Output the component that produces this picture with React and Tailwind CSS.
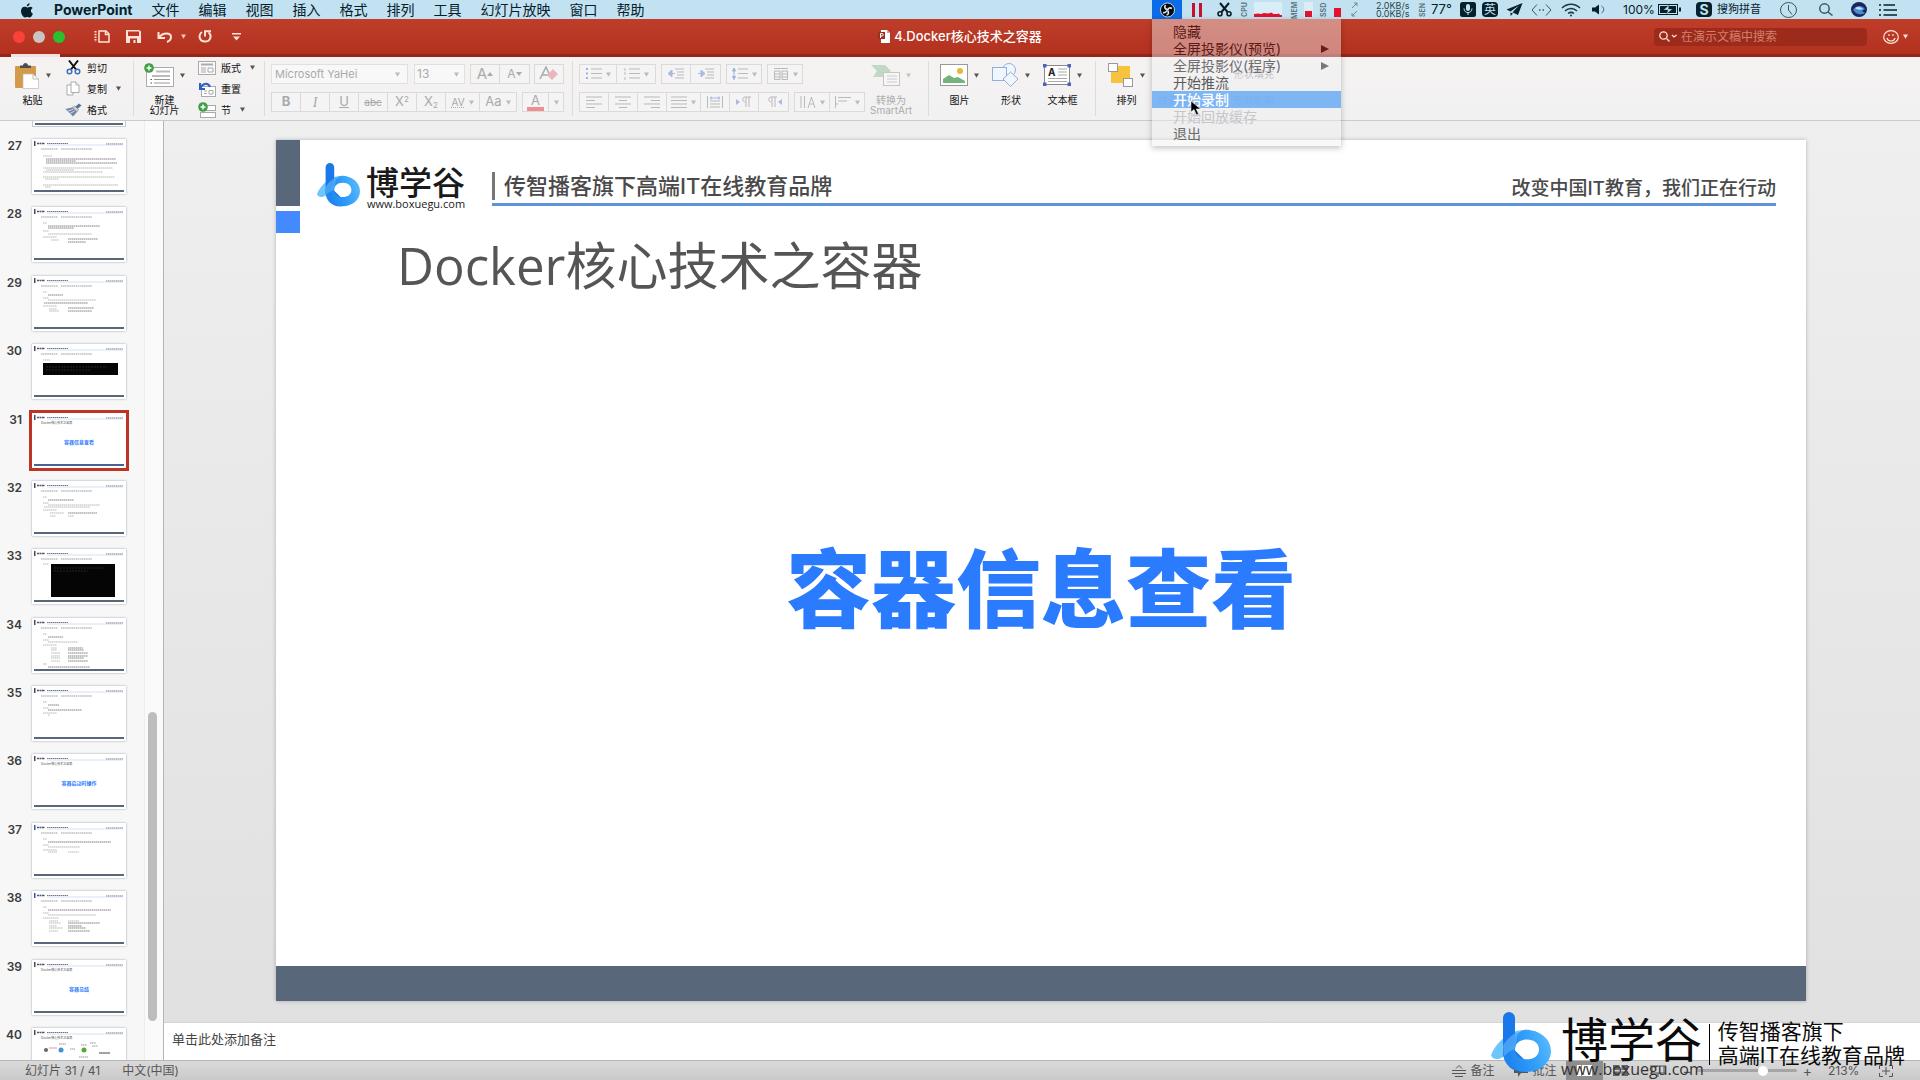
import React from "react";

const UI = "font-['Inter','Noto_Sans_CJK_SC',sans-serif]";

function Caret({ className = "text-[#555]" }) {
  return (
    <svg width="5" height="5" viewBox="0 0 5 5" className={`shrink-0 ${className}`} aria-hidden="true">
      <path d="M0 0.5H5L2.5 4.8Z" fill="currentColor" />
    </svg>
  );
}

function BrandMark({ className }) {
  return (
    <svg viewBox="0 0 60 62" preserveAspectRatio="none" className={className} aria-hidden="true">
      <defs>
        <linearGradient id="ring" x1="0" y1="0.6" x2="1" y2="0.3">
          <stop offset="0.1" stopColor="#1f86ef" />
          <stop offset="0.5" stopColor="#2f9bf8" />
          <stop offset="1" stopColor="#58bbff" />
        </linearGradient>
      </defs>
      <path d="M0 44C3 35 12 24 26 19L36 18L30 28C22 31 18 36 13 45C8 49 2 49 0 44Z" fill="#6fc6fb" />
      <path d="M12 6a6 6 0 0 1 12 0V24L23 38L35 50V61C20 62 12 52 12 40Z" fill="#1b78ea" />
      <path
        fillRule="evenodd"
        d="M35 18C48 18 60 27 60 39.500C60 52 49 61 36 61C23 61 12 53 12 40L22 32C25 23 29 18 35 18ZM36 28C29 28 24 32 24 38C24 44 29 48 36 48C43 48 48 44 48 38C48 32 43 28 36 28Z"
        fill="url(#ring)"
      />
      <path d="M12 34C16 27 21 23 27 20L24 38C20 38 16 42 13 45Z" fill="#4fa9f8" opacity="0.8" />
    </svg>
  );
}

/* ---------- system menu bar ---------- */

const MENUS = ["文件", "编辑", "视图", "插入", "格式", "排列", "工具", "幻灯片放映", "窗口", "帮助"];

function ObsMenu() {
  const row = "flex h-[17px] w-full items-center justify-between pl-[21px] pr-3 text-left text-[14px] leading-[17px] whitespace-nowrap";
  return (
    <div className="absolute left-0 top-full z-20 w-[189px] bg-[#f0f0f2]/45 py-1 shadow-[0_2px_6px_rgba(0,0,0,0.25)]" role="menu">
      <button className={`${row} text-[#5c1a17]`}>隐藏</button>
      <button className={`${row} text-[#5c1a17]`}>
        全屏投影仪(预览)
        <svg width="8" height="8" viewBox="0 0 8 8"><path d="M0 0L8 4L0 8Z" fill="#6a1d18" /></svg>
      </button>
      <button className={`${row} text-[#6e6e6e]`}>
        全屏投影仪(程序)
        <svg width="8" height="8" viewBox="0 0 8 8"><path d="M0 0L8 4L0 8Z" fill="#777" /></svg>
      </button>
      <button className={`${row} text-[#5a5a5a]`}>开始推流</button>
      <button className={`${row} bg-[#6aabf5]/85 font-medium text-white`}>开始录制</button>
      <button className={`${row} text-[#c4c6c9]`} disabled>开始回放缓存</button>
      <button className={`${row} text-[#6a6a6a]`}>退出</button>
      <svg className="absolute left-[38px] top-[81px]" width="12" height="16" viewBox="0 0 12 16" aria-hidden="true">
        <path d="M1 1V12L4 9.500L6.500 15L8.500 14L6.200 9H10.500Z" fill="#000" stroke="#fff" strokeWidth="0.5" />
      </svg>
    </div>
  );
}

function Vert({ children, className }) {
  return (
    <span className={`flex h-4 w-2 rotate-180 items-center justify-center text-[7px] font-bold leading-[8px] text-[#5d7480] [writing-mode:vertical-rl] ${className}`}>
      {children}
    </span>
  );
}

function MenuBar() {
  return (
    <header className="relative z-20 flex h-[19px] shrink-0 items-center bg-[#c2e2f1] pl-5 pr-[23px] text-[14px] text-[#06202c]">
      <svg width="14" height="15" viewBox="0 0 14 15" className="mt-px" aria-label="Apple">
        <path d="M9.600 0.300C9.700 1.900 8.300 3.500 6.800 3.400C6.600 1.900 8.100 0.400 9.600 0.300ZM12.900 10.500C12.300 12.300 11 14.500 9.600 14.500C8.700 14.500 8.400 14 7.300 14C6.200 14 5.800 14.500 5 14.500C3.200 14.500 1 11.200 1 8.100C1 5.300 2.800 3.800 4.600 3.800C5.700 3.800 6.500 4.500 7.300 4.500C8 4.500 9.100 3.700 10.300 3.700C11.200 3.700 12.100 4.100 12.700 4.900C10.100 6.400 10.600 9.500 12.900 10.500Z" fill="#06202c" />
      </svg>
      <nav className="flex items-center">
        <button className="ml-5 text-[14px] font-bold leading-[19px]">PowerPoint</button>
        {MENUS.map((m) => (
          <button key={m} className="ml-[19px] leading-[19px]">{m}</button>
        ))}
      </nav>

      <div className="ml-auto flex h-full items-center">
        <div className="relative flex h-full">
          <button className="flex h-full w-[30px] items-center justify-center bg-[#0c6be6]" aria-label="OBS">
            <svg width="17" height="16" viewBox="0 0 17 16">
              <circle cx="8.500" cy="8" r="7" fill="#04080c" stroke="#d7e3ee" strokeWidth="0.900" />
              <path d="M6.500 3C5 5 6 7 8.300 7.500M13 6.500C11 5.200 9.300 6 8.700 8.200M7.500 13C9.500 12.600 10.200 10.500 8.500 8.500M4 10.500C5.500 11 7 10.500 8 8.500" fill="none" stroke="#dfe8ef" strokeWidth="1.600" />
            </svg>
          </button>
          <ObsMenu />
        </div>
        <svg className="ml-[10px]" width="10" height="14" viewBox="0 0 10 14"><path d="M0 0H3V14H0ZM7 0H10V14H7Z" fill="#c8102e" /></svg>
        <svg className="ml-[15px]" width="15" height="15" viewBox="0 0 15 15" fill="none" stroke="#0b1d26">
          <path d="M3 1L10.500 10M12 1L4.500 10" strokeWidth="2" />
          <circle cx="3" cy="11.700" r="2" strokeWidth="1.600" /><circle cx="12" cy="11.700" r="2" strokeWidth="1.600" />
        </svg>
        <Vert className="ml-[9px]">CPU</Vert>
        <svg className="ml-[5px]" width="28" height="15" viewBox="0 0 28 15">
          <rect width="28" height="15" fill="#d9edf6" />
          <path d="M0 15V12L4 11.500L7 12L10 11L14 11.500L18 10.500L19 12H23L25 11.500L26 13H28V15Z" fill="#e0142f" />
        </svg>
        <Vert className="ml-[9px]">MEM</Vert>
        <svg className="ml-[5px]" width="9" height="15" viewBox="0 0 9 15"><rect width="9" height="15" fill="#dcecf4" /><rect x="1" y="9" width="7" height="6" fill="#e0142f" /></svg>
        <Vert className="ml-[7px]">SSD</Vert>
        <svg className="ml-[5px]" width="9" height="15" viewBox="0 0 9 15"><rect y="6" x="1" width="7" height="9" fill="#e0142f" /></svg>
        <svg className="ml-[9px]" width="7" height="15" viewBox="0 0 7 15" fill="none" stroke="#6f8793"><path d="M1 6L6 1M3 1H6V4M6 9L1 14M1 11V14H4" /></svg>
        <span className="ml-[18px] flex w-[34px] flex-col text-[9px] leading-[8px] whitespace-nowrap text-[#2c4450]">
          <span>2.0KB/s</span>
          <span>0.0KB/s</span>
        </span>
        <Vert className="ml-[9px]">SEN</Vert>
        <span className="ml-1 w-[22px] text-[13px] whitespace-nowrap">77°</span>
        <svg className="ml-[7px]" width="16" height="15" viewBox="0 0 16 15">
          <rect width="16" height="15" rx="2.500" fill="#06202c" />
          <rect x="6" y="2" width="4" height="7" rx="2" fill="#c2e2f1" />
          <path d="M4 6.500C4 12 12 12 12 6.500M8 10.500V13" fill="none" stroke="#c2e2f1" />
        </svg>
        <span className="ml-[6px] flex h-[15px] w-4 items-center justify-center rounded-sm bg-[#06202c] text-[12px] leading-none text-[#c2e2f1]">英</span>
        <svg className="ml-2" width="17" height="14" viewBox="0 0 17 14"><path d="M16.500 0L0.500 6.500L4.500 8.500L13 2.500L6.500 9.300L12 12ZM4.500 9.500V13L7 10.500ZM0.500 12.500L3 9.500Z" fill="#06202c" /></svg>
        <svg className="ml-2" width="21" height="12" viewBox="0 0 21 12" fill="none" stroke="#3c5663"><path d="M6 0.500L1 6L6 11.500M15 0.500L20 6L15 11.500" /><path d="M8 6H9.500M11.500 6H13" strokeWidth="1.500" /></svg>
        <svg className="ml-[9px]" width="20" height="14" viewBox="0 0 20 14" fill="none" stroke="#1c3642" strokeWidth="1.500">
          <path d="M1 5C6 0 14 0 19 5M4 8C7.500 4.500 12.500 4.500 16 8M7 10.500C9 9 11 9 13 10.500" /><circle cx="10" cy="12.500" r="1" fill="#1c3642" stroke="none" />
        </svg>
        <svg className="ml-[11px]" width="13" height="11" viewBox="0 0 13 11"><path d="M0 3.500H3L7 0.500V10.500L3 7.500H0Z" fill="#06202c" /><path d="M9.500 2C12.500 4 12.500 7 9.500 9" fill="none" stroke="#3c5663" /></svg>
        <span className="ml-[18px] w-[31px] text-[12px] whitespace-nowrap">100%</span>
        <svg className="ml-1" width="23" height="11" viewBox="0 0 23 11">
          <rect x="0.500" y="0.500" width="19" height="10" fill="none" stroke="#06202c" /><rect x="2" y="2" width="16" height="7" fill="#06202c" /><path d="M21 3.500H23V7.500H21Z" fill="#06202c" />
          <path d="M11 1L5.500 6H10L8.500 10L14.500 5H10.500Z" fill="#c2e2f1" stroke="#06202c" strokeWidth="0.300" />
        </svg>
        <span className="ml-[15px] flex h-[15px] w-4 items-center justify-center rounded-sm bg-[#06202c] text-[14px] font-bold leading-none text-[#c2e2f1]">S</span>
        <span className="ml-[5px] text-[11px]">搜狗拼音</span>
        <svg className="ml-[19px]" width="17" height="16" viewBox="0 0 17 16" fill="none" stroke="#3c5663"><ellipse cx="8.500" cy="8" rx="8" ry="7.500" /><path d="M8.500 3V8L12 12.500" /></svg>
        <svg className="ml-[22px]" width="14" height="13" viewBox="0 0 14 13" fill="none" stroke="#3c5663" strokeWidth="1.500"><circle cx="5.500" cy="5.500" r="4.700" /><path d="M9 9L13.500 12.500" /></svg>
        <svg className="ml-[18px]" width="16" height="15" viewBox="0 0 16 15">
          <ellipse cx="8" cy="7.500" rx="8" ry="7.500" fill="#20245c" /><path d="M2 8C5 3 11 3 14 7L11 9L14 11C9 14 5 12 2 8Z" fill="#3f8fd8" /><path d="M4 6C7 4 10 5 12 7C9 8 6 8 4 6Z" fill="#d5dcf5" />
        </svg>
        <svg className="ml-3" width="18" height="12" viewBox="0 0 18 12" stroke="#06202c" strokeWidth="1.500"><path d="M0 1H2M4.500 1H16M0 6H2M4.500 6H18M0 11H2M4.500 11H18" /></svg>
      </div>
    </header>
  );
}

/* ---------- window title bar ---------- */

function TitleBar() {
  return (
    <div className="relative grid h-[38px] shrink-0 grid-cols-[1fr_auto_1fr] items-center border-b-[3px] border-[#93261a] bg-linear-to-b from-[#bf3e2a] to-[#b3301f] text-[#fde4d6]">
      <div className="flex items-center pl-[13px]">
        <button className="size-3 rounded-full bg-[#f9423a]" aria-label="关闭" />
        <button className="ml-2 size-3 rounded-full bg-[#c9c5c2]" aria-label="最小化" />
        <button className="ml-2 size-3 rounded-full bg-[#27c22f]" aria-label="全屏" />
        <button className="ml-[29px]" aria-label="侧栏">
          <svg width="16" height="13" viewBox="0 0 16 13" fill="none" stroke="currentColor" strokeWidth="1.500"><path d="M5 1H12L15 4V12H5Z" /><path d="M11.500 1V4.500H15" /><path d="M1.500 1V12" strokeDasharray="1.500 1.200" strokeWidth="2" /></svg>
        </button>
        <button className="ml-4" aria-label="保存">
          <svg width="15" height="13" viewBox="0 0 15 13"><path fillRule="evenodd" d="M0 0H13L15 1.500V13H0ZM2 1.500V6H13V1.500ZM4 8.500V13H11V8.500ZM7.500 10H9.500V13H7.500Z" fill="currentColor" /></svg>
        </button>
        <button className="ml-4 flex items-center gap-2" aria-label="撤消">
          <svg width="16" height="12" viewBox="0 0 16 12" fill="none" stroke="currentColor" strokeWidth="2"><path d="M1.500 1V7H8M2 6.500C6 1 14 1.500 14 6C14 8.500 12.500 10 10 11" /></svg>
          <Caret className="text-[#f5c9b8]" />
        </button>
        <button className="ml-3" aria-label="重复">
          <svg width="14" height="13" viewBox="0 0 14 13" fill="none" stroke="currentColor" strokeWidth="2"><path d="M4 2C0 4.500 1 11.500 7 11.500C13 11.500 14 5 10.500 2.500" /><path d="M7 6.500V1.200H13" /></svg>
        </button>
        <button className="ml-5" aria-label="自定义">
          <svg width="9" height="8" viewBox="0 0 9 8" fill="currentColor"><path d="M0 0H9V1.500H0ZM1 3.500H8L4.500 7.500Z" /></svg>
        </button>
      </div>
      <div className="flex items-center gap-1">
        <svg width="12" height="13" viewBox="0 0 12 13"><path d="M3 0H9L12 3V13H3Z" fill="#fff" /><path d="M9 0V3H12Z" fill="#d8a294" /><rect x="0" y="2" width="7" height="7" fill="#9c3020" /><path d="M2.500 8V3.500H4.500Q6 4.800 4.500 6H2.500" fill="none" stroke="#fff" /></svg>
        <h1 className="text-[13px] font-medium whitespace-nowrap text-white">4.Docker核心技术之容器</h1>
      </div>
      <div className="flex items-center justify-end pr-[12px]">
        <label className="flex h-[18px] w-[213px] items-center rounded-sm bg-[#9c2b1b] pl-[5px]">
          <svg width="18" height="11" viewBox="0 0 18 11" fill="none" stroke="#fde4d6" strokeWidth="1.300"><circle cx="4.500" cy="4.500" r="3.700" /><path d="M7.500 7.500L10.500 10.500M13 4L15 6L17.500 4" /></svg>
          <input className="ml-1 w-40 bg-transparent text-[12px] text-white outline-none placeholder:text-[#d3806f]" placeholder="在演示文稿中搜索" aria-label="搜索" />
        </label>
        <button className="ml-4 flex items-center gap-1" aria-label="反馈">
          <svg width="16" height="14" viewBox="0 0 16 14" fill="none" stroke="#fde4d6" strokeWidth="1.200"><ellipse cx="8" cy="7" rx="7.300" ry="6.400" /><path d="M4 8C5 12 11 12 12 8M6 4V6M10 4V6" /></svg>
          <Caret className="text-[#fde4d6]" />
        </button>
      </div>
      <span className="absolute -bottom-[3px] left-[11px] h-[3px] w-[49px] bg-[#efe3e1]" />
    </div>
  );
}

/* ---------- ribbon ---------- */

function Big({ icon, label, faded, className = "" }) {
  return (
    <button className={`flex flex-col items-center ${faded ? "text-[#9a9a9a] opacity-80" : "text-[#111]"} ${className}`}>
      <span className="flex h-[28px] items-center gap-[6px]">
        {icon}
        <Caret className={faded ? "text-[#bbb]" : "text-[#555]"} />
      </span>
      <span className="mt-[6px] flex flex-col text-[10px] leading-[10px] whitespace-nowrap">
        {label.map((l) => <span key={l}>{l}</span>)}
      </span>
    </button>
  );
}

function Small({ icon, label, caret }) {
  return (
    <button className="flex flex-1 items-center gap-[5px] text-[10px] leading-none whitespace-nowrap text-[#111]">
      <span className="flex w-[18px] justify-center">{icon}</span>
      {label}
      {caret && <span className="ml-1"><Caret /></span>}
    </button>
  );
}

const Sep = () => <div className="my-1 w-px shrink-0 bg-[#dcdcdc]" />;

function Group({ children, className = "" }) {
  return <div className={`flex h-5 divide-x divide-[#dadada] border border-[#dadada] bg-[#f4f4f4] text-[#a9a9a9] ${className}`}>{children}</div>;
}

function Tool({ label, w = "w-[29px]", children, caret }) {
  return (
    <button className={`flex items-center justify-center gap-1 ${w}`} aria-label={label} disabled>
      {children}
      {caret && <Caret className="text-[#bbb]" />}
    </button>
  );
}

function Lines({ d = "M0 1H14M0 4H10M0 7H14M0 10H10", extra }) {
  return (
    <svg width="16" height="12" viewBox="0 0 16 12" fill="none" stroke="#b9b9b9">
      <path d={d} />
      {extra}
    </svg>
  );
}

const plus = <g><circle cx="5" cy="5" r="4.800" fill="#3f9d44" /><path d="M5 2.500V7.500M2.500 5H7.500" stroke="#fff" strokeWidth="1.500" /></g>;

function Ribbon() {
  return (
    <div className="flex h-[64px] shrink-0 border-b border-[#cbcbcb] bg-linear-to-b from-[#f6f2f2] to-[#f1f1f1]">
      <div className="flex w-[133px] shrink-0 pl-[14px] pt-1">
        <Big label={["粘贴"]} className="pb-3" icon={
          <svg width="26" height="27" viewBox="0 0 26 27"><rect x="1" y="4" width="21" height="22" rx="1" fill="#d39a4a" /><path d="M6 6V3.500H9C9 0 14 0 14 3.500H17V6Z" fill="#4e4e4e" /><path d="M9 12H19L24.500 17V26.500H9Z" fill="#fff" stroke="#bbb" strokeWidth="0.700" /><path d="M19 12V17H24.500" fill="none" stroke="#bbb" /></svg>
        } />
        <div className="-mt-1 ml-[13px] flex flex-col">
          <Small label="剪切" icon={<svg width="15" height="15" viewBox="0 0 15 15" fill="none"><path d="M3 0.500L10 9.500M12 0.500L5 9.500" stroke="#111" strokeWidth="2" /><circle cx="3.500" cy="11.500" r="2.300" stroke="#3a6fc4" strokeWidth="1.500" /><circle cx="11.500" cy="11.500" r="2.300" stroke="#3a6fc4" strokeWidth="1.500" /></svg>} />
          <Small label="复制" caret icon={<svg width="14" height="15" viewBox="0 0 14 15" fill="#fff" stroke="#999" strokeWidth="0.800"><path d="M1 4H7V14H1Z" /><path d="M5 1H10L13 4V11.500H5Z" /><path d="M10 1V4H13" /></svg>} />
          <Small label="格式" icon={<svg width="17" height="14" viewBox="0 0 17 14"><path d="M10 4L14 0.500L16.500 2.500L12.500 6Z" fill="#5b6f9c" /><path d="M7 4.500L10 3L13.500 6.500L12 9Z" fill="#c9ccd2" stroke="#777" strokeWidth="0.500" /><path d="M0.500 6L7 4.500L12 9L8 13.500Z" fill="#7484a5" /><path d="M3 8L8 6.500M5 10.500L9.500 8" stroke="#d5dbe6" /></svg>} />
        </div>
      </div>
      <Sep />
      <div className="flex w-[130px] shrink-0 pl-[10px] pt-1">
        <Big label={["新建", "幻灯片"]} icon={
          <svg width="30" height="25" viewBox="0 0 30 25"><rect x="2.500" y="4.500" width="27" height="19" fill="#fff" stroke="#aaa" /><path d="M12 8.500H26M8 13H26" stroke="#bbb" strokeWidth="2" /><path d="M10 16.500H26M10 20H26" stroke="#999" /><path d="M6.500 16.500H8M6.500 20H8" stroke="#555" />{plus}</svg>
        } />
        <div className="-mt-1 ml-[13px] flex flex-col">
          <Small label="版式" caret icon={<svg width="18" height="14" viewBox="0 0 18 14" fill="none" stroke="#aaa"><rect x="0.500" y="0.500" width="17" height="13" fill="#fafafa" /><path d="M3 3.500H15" strokeWidth="2" /><path d="M3 7H8M3 9H8M3 11H8" /><path d="M10 7H15V11H10Z" /></svg>} />
          <Small label="重置" icon={<svg width="18" height="16" viewBox="0 0 18 16" fill="none"><rect x="3.500" y="5.500" width="14" height="10" fill="#fff" stroke="#aaa" /><path d="M6 10H9M6 12.500H9M11 9.500H15V13H11Z" stroke="#aaa" /><path d="M2 2V8H7M2.500 7C4 2.500 10 1 12 6" stroke="#2b62c0" strokeWidth="2" /></svg>} />
          <Small label="节" caret icon={<svg width="18" height="16" viewBox="0 0 18 16"><rect x="4.500" y="3.500" width="13" height="5" fill="#fff" stroke="#aaa" /><rect x="2.500" y="10.500" width="15" height="5" fill="#fff" stroke="#aaa" />{plus}</svg>} />
        </div>
      </div>
      <Sep />
      <div className="flex w-[307px] shrink-0 flex-col gap-2 pl-[6px] pt-[7px] text-[12px] text-[#a9a9a9]">
        <div className="flex">
          <span className="flex h-5 w-[137px] items-center border border-[#e0e0e0] bg-[#f8f8f8] pr-[7px]">
            <select className="w-full appearance-none pl-[3px] text-[11px] text-[#aaa] outline-none" aria-label="字体"><option>Microsoft YaHei</option></select>
            <Caret className="text-[#bbb]" />
          </span>
          <span className="ml-[6px] flex h-5 w-[51px] items-center border border-[#e0e0e0] bg-[#f8f8f8] pr-[5px]">
            <select className="w-full appearance-none pl-[2px] text-[12px] text-[#aaa] outline-none" aria-label="字号"><option>13</option></select>
            <Caret className="text-[#bbb]" />
          </span>
          <Group className="ml-[5px]">
            <Tool label="增大字号"><span className="-mr-1 text-[15px]">A</span><svg width="6" height="4"><path d="M0 4L3 0L6 4Z" fill="#aaa" /></svg></Tool>
            <Tool label="减小字号"><span className="-mr-1 text-[12px]">A</span><svg width="6" height="4"><path d="M0 0H6L3 4Z" fill="#aaa" /></svg></Tool>
          </Group>
          <Group className="ml-[4px]">
            <Tool label="清除格式" w="w-[28px]"><svg width="20" height="16" viewBox="0 0 20 16"><path d="M1 13L7 1L12 12M3.500 9H10" fill="none" stroke="#aaa" strokeWidth="1.500" /><path d="M8 9L14 3L19 8L13 14Z" fill="#ecb6be" /></svg></Tool>
          </Group>
        </div>
        <div className="flex">
          <Group>
            <Tool label="加粗"><b className="text-[13px]">B</b></Tool>
            <Tool label="倾斜"><i className="font-['Liberation_Serif',serif] text-[14px]">I</i></Tool>
            <Tool label="下划线"><span className="text-[13px] underline">U</span></Tool>
            <Tool label="删除线"><span className="text-[10px] line-through">abc</span></Tool>
            <Tool label="上标"><span className="text-[13px]">X<sup className="text-[8px]">2</sup></span></Tool>
            <Tool label="下标"><span className="text-[13px]">X<sub className="text-[8px]">2</sub></span></Tool>
            <Tool label="字符间距" w="w-[34px]" caret><span className="text-[10px] underline decoration-dotted">AV</span></Tool>
            <Tool label="更改大小写" w="w-[36px]" caret><span className="text-[13px]">Aa</span></Tool>
          </Group>
          <Group className="ml-[5px]">
            <Tool label="字体颜色" w="w-[26px]"><span className="border-b-4 border-[#f08e93] px-1 text-[13px] leading-[13px]">A</span></Tool>
            <Tool label="颜色选项" w="w-[14px]" caret />
          </Group>
        </div>
      </div>
      <Sep />
      <div className="flex w-[355px] shrink-0 pl-[6px]">
        <div className="flex flex-col gap-2 pt-[7px]">
          <div className="flex gap-[5px]">
            <Group>
              <Tool label="项目符号" w="w-[37px]" caret><Lines d="M5 1H16M5 5.500H16M5 10H16" extra={<path d="M0 1H2M0 5.500H2M0 10H2" stroke="#9fb0dc" strokeWidth="2" />} /></Tool>
              <Tool label="编号" w="w-[38px]" caret><Lines d="M5 1H16M5 5.500H16M5 10H16" extra={<path d="M1 0V3M1 4V7M1 9V12" stroke="#bbb" />} /></Tool>
            </Group>
            <Group>
              <Tool label="减少缩进"><Lines d="M7 1H16M9 4H16M9 7H16M7 10H16" extra={<path d="M0 5.500L4 2V9ZM4 5.500H7" fill="#a9b8e4" stroke="#a9b8e4" />} /></Tool>
              <Tool label="增加缩进"><Lines d="M7 1H16M9 4H16M9 7H16M7 10H16" extra={<path d="M7 5.500L3 2V9ZM0 5.500H3" fill="#a9b8e4" stroke="#a9b8e4" />} /></Tool>
            </Group>
            <Group>
              <Tool label="行距" w="w-[34px]" caret><Lines d="M6 1H16M6 5.500H16M6 10H16" extra={<path d="M2 0L0.500 3H3.500ZM2 11.500L0.500 8.500H3.500ZM2 3V8" fill="#9fb0dc" stroke="#9fb0dc" />} /></Tool>
            </Group>
            <Group>
              <Tool label="分栏" w="w-[34px]" caret><Lines d="M1 0.500H15M1.500 3H7V11.500H1.500ZM9 3H14.500V11.500H9ZM1.500 6H7M9 6H14.500M1.500 9H7M9 9H14.500" /></Tool>
            </Group>
          </div>
          <div className="flex gap-[5px]">
            <Group>
              <Tool label="左对齐"><Lines d="M0 1H16M0 4.500H9M0 8H16M0 11.500H9" /></Tool>
              <Tool label="居中"><Lines d="M0 1H16M4 4.500H12M0 8H16M4 11.500H12" /></Tool>
              <Tool label="右对齐"><Lines d="M0 1H16M7 4.500H16M0 8H16M7 11.500H16" /></Tool>
              <Tool label="两端对齐" w="w-[34px]" caret><Lines d="M0 1H16M0 4.500H16M0 8H16M0 11.500H16" /></Tool>
              <Tool label="分散对齐"><Lines d="M0.500 0V12M15.500 0V12M3 5H13M3 8H13M3 11H13" extra={<path d="M3 2H13M5 0.500L3 2L5 3.500M11 0.500L13 2L11 3.500" stroke="#a9b8e4" />} /></Tool>
              <Tool label="从左到右"><Lines d="M10 1V11M13 1V11M15 1H9C6 1 6 6 9 6" extra={<path d="M0 3L4 6L0 9Z" fill="#a9b8e4" stroke="none" />} /></Tool>
              <Tool label="从右到左"><Lines d="M6 1V11M9 1V11M11 1H5C2 1 2 6 5 6" extra={<path d="M16 3L12 6L16 9Z" fill="#a9b8e4" stroke="none" />} /></Tool>
            </Group>
            <Group>
              <Tool label="文字方向" w="w-[35px]" caret><Lines d="M1 0V12M4.500 0V12M8 12L11.500 1L15 12M9.500 8H14" /></Tool>
              <Tool label="对齐文本" w="w-[34px]" caret><Lines d="M0.500 0V12M3 1.500H16M3 5H12M0 8H3" /></Tool>
            </Group>
          </div>
        </div>
        <Big faded label={["转换为", "SmartArt"]} className="ml-[5px] pt-1" icon={
          <svg width="29" height="23" viewBox="0 0 29 23"><path d="M0 1H14L20 7L14 13H2L6 7Z" fill="#b5d3b8" /><rect x="12.500" y="8.500" width="16" height="13" fill="#f7f7f7" stroke="#bbb" /><path d="M16 12H26M16 15H26M16 18H26" stroke="#c5c5c5" /></svg>
        } />
      </div>
      <Sep />
      <div className="flex w-[166px] shrink-0 justify-between pl-[11px] pr-[13px] pt-1">
        <Big label={["图片"]} className="pb-3" icon={
          <svg width="28" height="22" viewBox="0 0 28 22"><rect x="0.500" y="0.500" width="27" height="21" fill="#fff" stroke="#999" /><circle cx="20" cy="7" r="3" fill="#e5b937" /><path d="M3 19V15L9 11L14 14L18 13L25 17V19Z" fill="#76b27b" /></svg>
        } />
        <Big label={["形状"]} className="pb-3" icon={
          <svg width="27" height="24" viewBox="0 0 27 24" fill="#f0f6fd" stroke="#8fb0dc"><circle cx="17" cy="7" r="6.500" /><rect x="0.500" y="4.500" width="14" height="13" /><path d="M18.500 9L26 16L18.500 23.500L11 16Z" /></svg>
        } />
        <Big label={["文本框"]} className="pb-3" icon={
          <svg width="28" height="22" viewBox="0 0 28 22"><rect x="1.500" y="1.500" width="25" height="19" fill="#fff" stroke="#888" /><path d="M0 0H3.500V3.500H0ZM24.500 0H28V3.500H24.500ZM0 18.500H3.500V22H0ZM24.500 18.500H28V22H24.500Z" fill="#4f62bd" /><text x="5" y="11.500" fontSize="10" fontWeight="700" fill="#222">A</text><path d="M15 5H24M15 8H24M15 11H24M5 14.500H24M5 17.500H24" stroke="#aaa" /></svg>
        } />
      </div>
      <Sep />
      <div className="flex shrink-0 pl-3 pt-1">
        <Big label={["排列"]} className="pb-3" icon={
          <svg width="26" height="24" viewBox="0 0 26 24"><rect x="3" y="3" width="19" height="17" fill="#f7c23c" /><rect x="0.500" y="0.500" width="9" height="8" fill="#fff" stroke="#999" /><rect x="15.500" y="15.500" width="9" height="8" fill="#fff" stroke="#999" /></svg>
        } />
        <div className="ml-[13px] flex flex-col gap-[13px] pt-[7px] text-[10px] leading-[13px] text-[#a3a3a3]">
          <span className="text-right">形状填充</span>
          <span className="flex gap-9"><span>快速样式</span><span>形状轮廓</span></span>
        </div>
      </div>
    </div>
  );
}

/* ---------- slide thumbnails ---------- */

// Each line is [x, y, width] on the 94 x 55 thumbnail.
const THUMBS = [
  { n: 27, lines: [[11, 17, 9], [14, 20, 70, 1], [14, 22, 30, 1], [14, 24, 71, 1], [11, 29, 70], [14, 31, 28], [11, 33, 60], [11, 38, 72], [13, 40, 14], [11, 46, 75], [13, 48, 6]] },
  { n: 28, lines: [[11, 16, 4], [16, 19, 52, 1], [16, 21, 26, 1], [11, 24, 6], [16, 27, 44], [11, 30, 14], [19, 33, 8], [36, 32, 30, 1], [36, 35, 18, 1]] },
  { n: 29, lines: [[11, 16, 4], [16, 19, 15, 1], [11, 22, 6], [16, 24, 48], [12, 27, 44, 1], [11, 30, 14], [17, 33, 8], [36, 32, 26, 1], [17, 35, 10], [36, 35, 24, 1]] },
  { n: 30, black: [11, 19, 75, 12], lines: [[11, 16, 7]] },
  { n: 31, big: "容器信息查看" },
  { n: 32, lines: [[11, 16, 4], [16, 19, 26, 1], [11, 22, 6], [16, 24, 52], [12, 26, 46], [11, 29, 14], [18, 32, 14], [36, 32, 29, 1], [18, 35, 6], [36, 35, 6]] },
  { n: 33, black: [19, 15, 64, 33], lines: [[11, 15, 6]] },
  { n: 34, lines: [[11, 16, 4], [16, 19, 15, 1], [11, 22, 6], [16, 24, 30], [11, 27, 14], [19, 30, 6], [36, 30, 15, 1], [19, 32, 6], [36, 32, 16, 1], [19, 35, 9], [36, 35, 20, 1], [19, 38, 9], [36, 38, 20, 1], [19, 40, 9], [36, 40, 16, 1], [19, 43, 9], [36, 43, 20, 1], [11, 46, 4], [16, 49, 42, 1]] },
  { n: 35, lines: [[11, 16, 4], [16, 19, 11, 1], [11, 22, 6], [16, 24, 34, 1], [11, 27, 14], [16, 29, 2]] },
  { n: 36, big: "容器启动时操作" },
  { n: 37, lines: [[11, 16, 4], [16, 19, 63, 1], [11, 22, 6], [16, 24, 32], [11, 27, 14], [16, 29, 9], [36, 29, 11]] },
  { n: 38, lines: [[11, 16, 4], [16, 19, 63, 1], [11, 22, 6], [16, 24, 48], [11, 27, 16], [17, 30, 9], [36, 30, 11], [17, 32, 12], [36, 32, 32, 1], [17, 35, 8], [36, 35, 14, 1], [17, 37, 14], [36, 37, 18, 1], [17, 40, 9], [36, 40, 22, 1]] },
  { n: 39, big: "容器总结" },
  { n: 40, dots: true },
];

function Thumb({ t }) {
  const active = t.n === 31;
  return (
    <button className="flex w-full items-start text-left" aria-current={active}>
      <span className="w-[22px] text-right text-[12px] font-semibold leading-[14px] text-[#3b3b3b]">{t.n}</span>
      <span className={active ? "ml-[10px] outline-3 outline-[#bd3426]" : "ml-[10px] shadow-[0_0_2px_rgba(70,90,110,0.55)]"}>
        <svg width="94" height="55" viewBox="0 0 94 55" className="block bg-white">
          <rect x="2" y="2" width="1.500" height="5" fill={t.n === 37 || t.n === 38 ? "#3558b8" : "#444d59"} />
          <path d="M5 4.500H13" stroke="#556" strokeWidth="1.500" strokeDasharray="2 0.500" />
          <path d="M15 4.500H36M74 5H91" stroke="#778" strokeWidth="1" strokeDasharray="1.500 0.500" />
          <path d="M15 6H91" stroke="#b9cdea" strokeWidth="0.600" />
          {t.big || t.dots ? (
            <text x="9" y="11" fontSize="3" fill="#555">Docker核心技术之容器</text>
          ) : (
            <path d="M9 10H26M29 10H60" stroke="#999" strokeWidth="1.200" strokeDasharray="1.500 0.600" />
          )}
          {(t.lines || []).map(([x, y, w, dark], i) => (
            <path key={i} d={`M${x} ${y}h${w}`} stroke={dark ? "#888" : "#bbb"} strokeWidth="1" strokeDasharray="1.600 0.400" />
          ))}
          {t.big && <text x="47" y="31" fontSize="5" fontWeight="700" fill="#2b7bff" textAnchor="middle">{t.big}</text>}
          {t.black && (
            <g>
              <rect x={t.black[0]} y={t.black[1]} width={t.black[2]} height={t.black[3]} fill="#050505" />
              <path d={`M${t.black[0] + 3} ${t.black[1] + 4}h${t.black[2] - 14}m-${t.black[2] - 14} 3h${t.black[2] - 30}`} stroke="#3a3a3a" strokeWidth="0.600" strokeDasharray="2 1" />
            </g>
          )}
          {t.dots && (
            <g>
              <circle cx="14" cy="22" r="2" fill="#666" /><circle cx="29" cy="22" r="2.500" fill="#3c94d6" /><circle cx="52" cy="22" r="2.500" fill="#56ab2f" />
              <path d="M17 20H25" stroke="#d99" /><path d="M27 16H34M38 21H43M49 17H55M58 15H64M60 18H66M47 29H56" stroke="#999" strokeDasharray="1.500 0.400" /><path d="M67 25H78" stroke="#444" />
            </g>
          )}
          <rect x="2" y="51" width="90" height="2" fill={active ? "#4c6190" : "#58677a"} />
        </svg>
      </span>
    </button>
  );
}

function ThumbPanel() {
  return (
    <aside className="flex w-[164px] shrink-0 border-r border-[#b4b4b4] bg-[#f7f7f7]">
      <div className="flex-1 overflow-hidden">
        <div className="ml-8 h-[6px] w-[94px] border-x border-b border-[#c3cad2] bg-white px-[2px] pt-[2px]">
          <div className="h-[2px] bg-[#58677a]" />
        </div>
        <div className="mt-3 flex h-[944px] flex-col justify-between">
          {THUMBS.map((t) => <Thumb key={t.n} t={t} />)}
        </div>
      </div>
      <div className="flex w-[19px] flex-col items-center border-l border-[#ededed] bg-[#fafafa] pr-1">
        <div className="flex-[591]" />
        <div className="w-[9px] flex-[309] rounded-full bg-[#bdbdbd]" />
        <div className="flex-[39]" />
      </div>
    </aside>
  );
}

/* ---------- slide ---------- */

function Slide() {
  return (
    <article className="mb-[21px] ml-28 mr-[114px] mt-[19px] flex flex-1 flex-col bg-white shadow-[0_0_4px_rgba(0,0,0,0.25)]">
      <div className="flex">
        <div className="flex flex-col gap-[5px]">
          <div className="h-[66px] w-6 bg-[#58677a]" />
          <div className="h-[22px] w-6 bg-[#448aff]" />
        </div>
        <BrandMark className="ml-[17px] mt-[23px] h-[44px] w-[43px]" />
        <div className="ml-[6px] mt-[27px] flex w-[100px] flex-col text-[#1a1a1a]">
          <span className="text-[33px] font-medium leading-[32px]">博学谷</span>
          <span className="text-center font-['Open_Sans',sans-serif] text-[11px] leading-[10px] whitespace-nowrap">www.boxuegu.com</span>
        </div>
        <div className="ml-[26px] mr-[30px] flex h-[66px] flex-1 items-end justify-between border-b-3 border-[#5b93de] text-[#4a4a4a]">
          <div className="mb-[3px] flex items-center">
            <span className="h-7 w-[3px] bg-[#777]" />
            <span className="ml-[9px] text-[22px] font-medium leading-[28px] whitespace-nowrap">传智播客旗下高端IT在线教育品牌</span>
          </div>
          <span className="mb-[2px] text-[19px] font-medium leading-[24px] whitespace-nowrap">改变中国IT教育，我们正在行动</span>
        </div>
      </div>
      <h2 className="ml-[121px] mt-[2px] font-['Open_Sans','Noto_Sans_CJK_SC',sans-serif] text-[51px] leading-[60px] text-[#555]">Docker核心技术之容器</h2>
      <div className="flex flex-1 justify-center pt-[246px]">
        <p className="text-[85px] font-black leading-[100px] text-[#2b7bff]">容器信息查看</p>
      </div>
      <div className="h-[35px] bg-[#58677a]" />
    </article>
  );
}

function StatusBar() {
  return (
    <footer className="flex h-5 shrink-0 items-center border-t border-[#b5b5b5] bg-linear-to-b from-[#dadada] to-[#c9c9c9] pl-[25px] pr-[27px] text-[12px] text-[#555]">
      <span className="whitespace-nowrap">幻灯片 31 / 41</span>
      <button className="ml-[22px]">中文(中国)</button>
      <div className="ml-auto flex h-full items-center">
        <button className="flex items-center gap-1">
          <svg width="14" height="12" viewBox="0 0 14 12" stroke="#555" fill="none"><path d="M4 3.500L7 0.500L10 3.500M0 5.500H14M0 8.500H14M3 11.500H11" /></svg>
          备注
        </button>
        <button className="ml-5 flex items-center gap-1">
          <svg width="14" height="12" viewBox="0 0 14 12"><path d="M0 0H14V8H7L4 12V8H0Z" fill="#555" /></svg>
          批注
        </button>
        <button className="ml-[10px] flex h-full w-[37px] items-center justify-center bg-[#8d8d8d]" aria-label="普通视图">
          <svg width="15" height="11" viewBox="0 0 15 11"><path d="M0 0H15V11H0Z" fill="#fff" /><path d="M4.500 0V11" stroke="#8d8d8d" /></svg>
        </button>
        <button className="ml-[10px]" aria-label="幻灯片浏览"><svg width="15" height="11" viewBox="0 0 15 11"><path d="M0 0H6.500V5H0ZM8.500 0H15V5H8.500ZM0 6.500H6.500V11H0ZM8.500 6.500H15V11H8.500Z" fill="#666" /></svg></button>
        <button className="ml-[22px]" aria-label="放映"><svg width="16" height="12" viewBox="0 0 16 12" fill="none" stroke="#555"><path d="M0 1H16M2 1V8H14V1M8 8V12" /></svg></button>
        <button className="ml-4 text-[14px]" aria-label="缩小">−</button>
        <input type="range" defaultValue="68" aria-label="显示比例" className="ml-1 h-[3px] w-[101px] appearance-none rounded-full bg-[#a5a5a5] [&::-webkit-slider-thumb]:size-[10px] [&::-webkit-slider-thumb]:appearance-none [&::-webkit-slider-thumb]:rounded-full [&::-webkit-slider-thumb]:bg-white" />
        <button className="ml-[6px] text-[14px]" aria-label="放大">+</button>
        <span className="ml-4 w-[30px] text-[12px]">213%</span>
        <button className="ml-[21px]" aria-label="适应窗口"><svg width="14" height="12" viewBox="0 0 14 12" fill="none" stroke="#555"><path d="M0.500 4V0.500H4M10 0.500H13.500V4M13.500 8V11.500H10M4 11.500H0.500V8M7 2V10M3 6H11" /></svg></button>
      </div>
    </footer>
  );
}

function Watermark() {
  return (
    <div className="pointer-events-none absolute bottom-1 right-[15px] z-30 flex items-start text-[#0b0b0b]">
      <BrandMark className="mt-[2px] h-[61px] w-[60px]" />
      <div className="ml-[10px] flex flex-col">
        <span className="mt-2 text-[47px] leading-[44px]">博学谷</span>
        <span className="text-center font-['Open_Sans',sans-serif] text-[16px] leading-[14px] whitespace-nowrap text-[#333]">www.boxuegu.com</span>
      </div>
      <span className="ml-[5px] mt-[14px] h-[41px] w-px bg-black" />
      <div className="ml-2 mt-[10px] flex flex-col text-[21px] leading-[24px] whitespace-nowrap">
        <span>传智播客旗下</span>
        <span>高端IT在线教育品牌</span>
      </div>
    </div>
  );
}

export default function App() {
  return (
    <div className={`relative flex h-screen w-full flex-col overflow-hidden bg-[#e6e6e6] ${UI}`}>
      <MenuBar />
      <TitleBar />
      <Ribbon />
      <div className="flex min-h-0 flex-1">
        <ThumbPanel />
        <main className="flex min-w-0 flex-1 flex-col bg-linear-to-b from-[#efefef] to-[#e0e0e0]">
          <Slide />
          <div className="h-[38px] border-t border-[#d5d5d5] bg-white px-2 pt-[3px]">
            <input className="w-full text-[13px] leading-5 outline-none placeholder:text-[#444]" placeholder="单击此处添加备注" aria-label="备注" />
          </div>
        </main>
      </div>
      <StatusBar />
      <Watermark />
    </div>
  );
}
